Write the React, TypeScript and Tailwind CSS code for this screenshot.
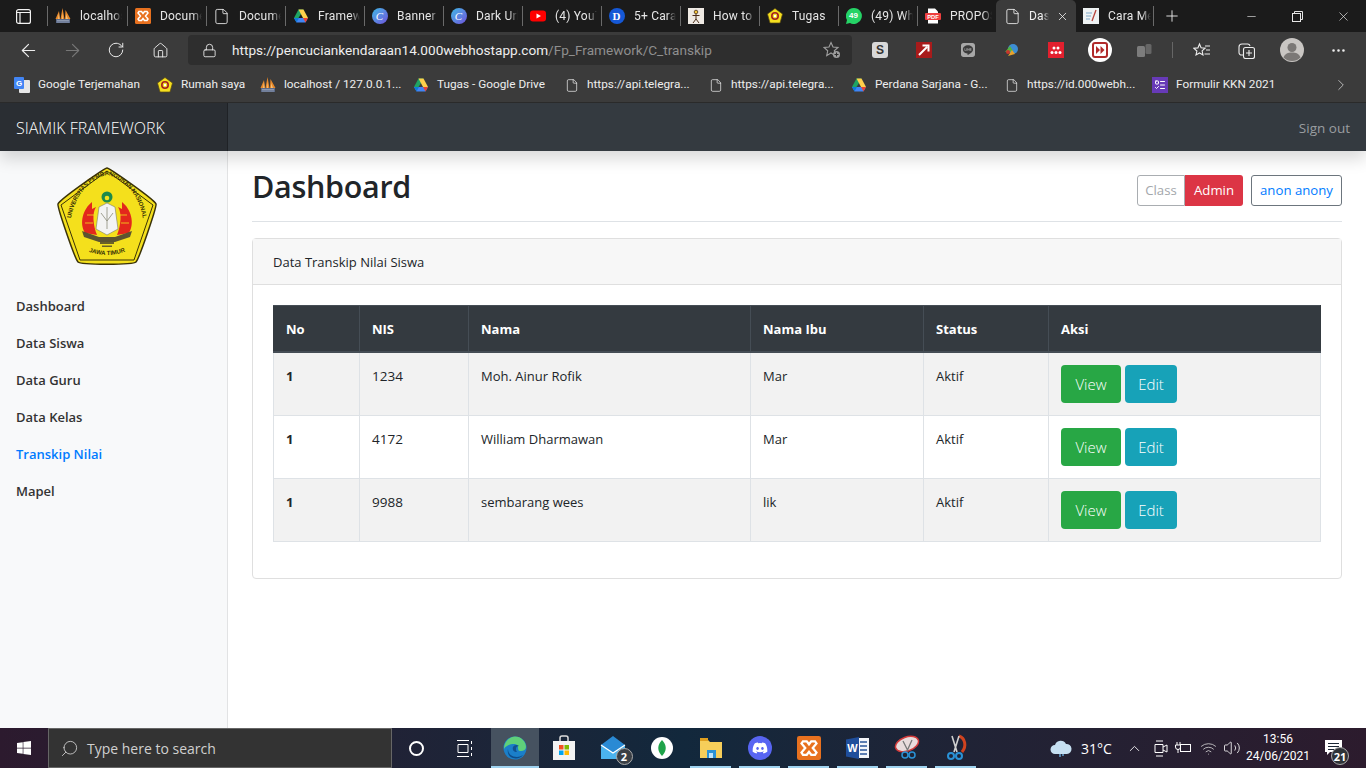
import React from "react";
import { ArrowLeft, ArrowRight, RotateCw, Home, Lock, Plus, X, Minus, ChevronRight, Search, ChevronUp, Volume2, Wifi, File, MoreHorizontal, ListTodo } from "lucide-react";
import { FaWindows, FaDiscord, FaLine } from "react-icons/fa";

const Pma = ({ s = 16 }: { s?: number }) => (
  <svg width={s} height={s} viewBox="0 0 16 16">
    <path d="M0.500 11 L4 3 L5 11Z M5.500 11 L7.500 0 L9.500 11Z M10 11 L10.500 2 L15.500 11Z" fill="#e8892a" />
    <path d="M3 11 L4 5 L4.500 11Z M7 11 L7.500 4 L8 11Z M11 11 L11 6 L13 11Z" fill="#f6c27a" />
    <rect x="1" y="11" width="14" height="4" fill="#5b6a88" />
    <path d="M2 12.500h12M2 14h12" stroke="#aeb7c9" strokeWidth=".6" />
  </svg>
);
const Xampp = ({ s = 16 }: { s?: number }) => (
  <svg width={s} height={s} viewBox="0 0 16 16">
    <rect width="16" height="16" rx="1.500" fill="#e8711f" />
    <path d="M4 3.500h2.500l1.500 2 1.500-2H12l1 1.500-2.500 3 2.500 3L12 12.500H9.500l-1.500-2-1.500 2H4l-1-1.500 2.500-3L3 5z" fill="none" stroke="#fff" strokeWidth="1.500" />
  </svg>
);
const Drive = ({ s = 16 }: { s?: number }) => (
  <svg width={s} height={s} viewBox="0 0 16 16">
    <path d="M5.500 1.500h5L8 6 5.500 10H1z" fill="#1fa463" />
    <path d="M5.500 1.500h5L15 10h-5z" fill="#ffd04b" />
    <path d="M4 10h11l-2.500 4.500H3.500L1 10z" fill="#4285f4" />
    <path d="M1 10h5l-2.500 4.500z" fill="#0f7ad8" />
    <path d="M10 10h5l-2.500 4.500z" fill="#ea4335" />
  </svg>
);
const Canva = () => (
  <div className="flex h-4 w-4 items-center justify-center rounded-full bg-gradient-to-br from-[#2fb8e6] to-[#6a4fdc] font-['Liberation_Serif',serif] text-[11px] italic text-white">C</div>
);
const Yt = () => (
  <svg width="16" height="16" viewBox="0 0 16 16">
    <rect y="2.500" width="16" height="11" rx="3" fill="#f00" />
    <path d="M6.500 5.500v5L11 8z" fill="#fff" />
  </svg>
);
const DIcon = () => (
  <div className="flex h-4 w-4 items-center justify-center rounded-full bg-[#1558d6] font-['Liberation_Serif',serif] text-[11px] font-bold text-white">D</div>
);
const Stick = () => (
  <svg width="16" height="16" viewBox="0 0 16 16">
    <rect width="16" height="16" fill="#efeae4" />
    <circle cx="8" cy="4" r="1.800" fill="#f3c73a" stroke="#4a2c17" strokeWidth=".8" />
    <path d="M8 6v5M4.500 7.500h7M8 11l-3 4M8 11l3 4" stroke="#4a2c17" strokeWidth="1" fill="none" />
  </svg>
);
const Badge = ({ s = 16 }: { s?: number }) => (
  <svg width={s} height={s} viewBox="0 0 16 16">
    <path d="M8 .500 15.500 6 13 15H3L.500 6z" fill="#f5df1f" stroke="#5b4a10" strokeWidth=".7" strokeLinejoin="round" />
    <circle cx="8" cy="8" r="3.200" fill="none" stroke="#a32222" strokeWidth="1.600" />
    <circle cx="8" cy="8" r="1.200" fill="#fff" />
  </svg>
);
const Wa = () => (
  <div className="relative flex h-4 w-4 items-center justify-center">
    <svg className="absolute inset-0" width="16" height="16" viewBox="0 0 16 16"><path d="M8 0a8 8 0 1 1-4 15L0 16l1-4A8 8 0 0 1 8 0z" fill="#25d366" /></svg>
    <span className="relative font-['Liberation_Sans',sans-serif] text-[8px] font-bold leading-none text-white">49</span>
  </div>
);
const Pdf = () => (
  <svg width="16" height="16" viewBox="0 0 16 16">
    <path d="M3 .500h7l3 3V15.500H3z" fill="#fff" />
    <rect y="5" width="16" height="7" rx="1" fill="#ee3f3f" />
    <text x="8" y="10.800" textAnchor="middle" fontSize="5.800" fontWeight="700" fill="#fff" fontFamily="Liberation Sans">PDF</text>
  </svg>
);
const Note = () => (
  <svg width="16" height="16" viewBox="0 0 16 16">
    <rect width="16" height="16" fill="#eef2f3" />
    <path d="M3 5h6M3 8h5M3 11h4" stroke="#7fa8c9" strokeWidth="1" />
    <path d="M13 2 9 13" stroke="#b8443b" strokeWidth="1.300" />
  </svg>
);
const FileI = () => <File size={17} strokeWidth={1.200} className="text-[#f2f2f2]" />;

const tabs: { icon: React.ReactNode; title: string; w: string }[] = [
  { icon: <Pma />, title: "localhost", w: "w-[80px]" },
  { icon: <Xampp />, title: "Documen", w: "w-[79px]" },
  { icon: <FileI />, title: "Documen", w: "w-[79px]" },
  { icon: <Drive />, title: "Framewo", w: "w-[79px]" },
  { icon: <Canva />, title: "Banner Y", w: "w-[79px]" },
  { icon: <Canva />, title: "Dark Urb", w: "w-[79px]" },
  { icon: <Yt />, title: "(4) YouTu", w: "w-[79px]" },
  { icon: <DIcon />, title: "5+ Cara", w: "w-[79px]" },
  { icon: <Stick />, title: "How to", w: "w-[79px]" },
  { icon: <Badge />, title: "Tugas", w: "w-[79px]" },
  { icon: <Wa />, title: "(49) Wha", w: "w-[79px]" },
  { icon: <Pdf />, title: "PROPOS", w: "w-[79px]" },
];

const Tab = ({ icon, title, w }: { icon: React.ReactNode; title: string; w: string }) => (
  <div className={`flex h-8 shrink-0 items-center ${w}`}>
    <div className="h-[20px] w-px shrink-0 bg-[#6a6a6a]" />
    <div className="ml-[6px] flex w-[17px] shrink-0 justify-center">{icon}</div>
    <div className="ml-[9px] w-[42px] overflow-hidden whitespace-nowrap text-[12px] tracking-[0.2px] text-[#e6e6e6] [mask-image:linear-gradient(to_right,black_78%,transparent)]">{title}</div>
  </div>
);

const TabStrip = () => (
  <div className="flex h-8 shrink-0 items-center bg-[#1b1b1b] font-['Roboto',sans-serif]">
    <div className="flex h-8 w-[47px] shrink-0 items-center justify-center">
      <svg width="15" height="15" viewBox="0 0 15 15" fill="none" stroke="#f2f2f2" strokeWidth="1.200"><rect x=".600" y=".600" width="13.800" height="13.800" rx="2" /><path d="M.600 3.500h13.800M4 3.500v11" /></svg>
    </div>
    {tabs.map((t, i) => <Tab key={i} {...t} />)}
    <div className="flex h-8 w-[80px] shrink-0 items-center rounded-t-[5px] bg-[#3b3b3b]">
      <div className="ml-[8px] flex w-[17px] justify-center"><FileI /></div>
      <div className="ml-[8px] w-[20px] overflow-hidden whitespace-nowrap text-[12px] tracking-[0.2px] text-[#f0f0f0] [mask-image:linear-gradient(to_right,black_70%,transparent)]">Das</div>
      <X size={13} strokeWidth={1.500} className="ml-[7px] text-[#f0f0f0]" />
    </div>
    <div className="flex h-8 w-[78px] shrink-0 items-center">
      <div className="ml-[6px] flex w-[17px] justify-center"><Note /></div>
      <div className="ml-[9px] w-[43px] overflow-hidden whitespace-nowrap text-[12px] tracking-[0.2px] text-[#e6e6e6] [mask-image:linear-gradient(to_right,black_78%,transparent)]">Cara Mem</div>
      <div className="ml-[2px] h-[20px] w-px bg-[#6a6a6a]" />
    </div>
    <div className="flex w-[36px] justify-center"><Plus size={18} strokeWidth={1.200} className="text-[#f2f2f2]" /></div>
    <div className="ml-auto flex h-8">
      <div className="flex w-[46px] items-center justify-center"><Minus size={13} strokeWidth={1.200} className="text-[#e6e6e6]" /></div>
      <div className="flex w-[46px] items-center justify-center">
        <svg width="11" height="11" viewBox="0 0 11 11" fill="none" stroke="#e6e6e6" strokeWidth="1"><rect x=".500" y="2.500" width="8" height="8" /><path d="M2.500 2.500V.500h8v8h-2" /></svg>
      </div>
      <div className="flex w-[46px] items-center justify-center"><X size={15} strokeWidth={1.100} className="text-[#e6e6e6]" /></div>
    </div>
  </div>
);

const Btn = ({ children }: { children: React.ReactNode }) => (
  <div className="flex h-9 w-11 shrink-0 items-center justify-center">{children}</div>
);

const Toolbar = () => (
  <div className="flex h-9 shrink-0 items-center bg-[#3b3b3b] pl-[6px] font-['Roboto',sans-serif]">
    <Btn><ArrowLeft size={21} strokeWidth={1.300} className="text-[#eeeeee]" /></Btn>
    <Btn><ArrowRight size={21} strokeWidth={1.300} className="text-[#777777]" /></Btn>
    <Btn><RotateCw size={18} strokeWidth={1.300} className="text-[#eeeeee]" /></Btn>
    <Btn><Home size={17} strokeWidth={1.300} className="text-[#eeeeee]" /></Btn>
    <div className="ml-[6px] flex h-[30px] w-[664px] shrink-0 items-center rounded-[4px] bg-[#2e2e2e]">
      <Lock size={15} strokeWidth={1.400} className="ml-[14px] text-[#eeeeee]" />
      <div className="ml-[15px] whitespace-nowrap text-[13.600px] text-[#eeeeee]">https://pencuciankendaraan14.000webhostapp.com<span className="text-[#8f8f8f]">/Fp_Framework/C_transkip</span></div>
      <div className="relative ml-auto mr-[11px] h-[18px] w-[18px]">
        <svg width="18" height="18" viewBox="0 0 18 18" fill="none" stroke="#a0a0a0" strokeWidth="1.100"><path d="M8 1.500l2 4.500 5 .5-3.700 3.300 1 4.800L8 12l-4.300 2.600 1-4.800L1 6.500 6 6z" /><circle cx="13.500" cy="13.500" r="3.500" fill="#a0a0a0" stroke="none" /><path d="M13.500 11.500v4M11.500 13.500h4" stroke="#2e2e2e" /></svg>
      </div>
    </div>
    <div className="ml-[6px] flex">
      <Btn><div className="flex h-4 w-4 items-center justify-center rounded-[3px] bg-[#d8d8d8] font-['Liberation_Sans',sans-serif] text-[12px] font-bold text-[#333]">S</div></Btn>
      <Btn><svg width="16" height="16" viewBox="0 0 16 16"><rect width="16" height="16" fill="#a81b1b" /><path d="M3 13 11 5M6.500 3.500h6v6" stroke="#fff" strokeWidth="2" fill="none" /></svg></Btn>
      <Btn><FaLine size={16} className="text-[#a8a8a8]" /></Btn>
      <Btn><svg width="16" height="14" viewBox="0 0 16 14"><circle cx="9" cy="6" r="5" fill="#3d8ed4" /><path d="M1 9 6 3l3 5z" fill="#55b33d" /><path d="M4 13 8 7l3 4z" fill="#e8a32b" /><circle cx="4" cy="9" r="2" fill="#c9352b" /></svg></Btn>
      <Btn><div className="flex h-4 w-4 flex-col items-center justify-center bg-[#e2202e]"><svg width="12" height="8" viewBox="0 0 12 8" fill="#fff"><circle cx="2" cy="6.500" r="1.500" /><circle cx="6" cy="6.500" r="1.500" /><circle cx="10" cy="6.500" r="1.500" /><circle cx="4" cy="2" r="1.500" /><circle cx="8" cy="2" r="1.500" /></svg></div></Btn>
      <Btn><div className="flex h-6 w-6 items-center justify-center rounded-full bg-white"><div className="flex h-[16px] w-[16px] items-center justify-center rounded-[3px] border-2 border-[#b02a2a]"><svg width="9" height="8" viewBox="0 0 9 8" fill="#b02a2a"><path d="M0 0l4 4-4 4zM4.500 0l4 4-4 4z" /></svg></div></div></Btn>
      <Btn><svg width="15" height="15" viewBox="0 0 15 15" fill="#7c7c7c"><rect y="3" width="8" height="11" rx="1.500" /><rect x="8.500" y="1" width="6" height="10" rx="1.500" fill="#666" /></svg></Btn>
    </div>
    <div className="ml-[6px] h-4 w-px bg-[#666]" />
    <div className="ml-[7px] flex">
      <Btn><svg width="18" height="17" viewBox="0 0 18 17" fill="none" stroke="#eeeeee" strokeWidth="1.100"><path d="M6.500 2l1.600 3.800 4 .4-3 2.700.9 4L6.500 11l-3.500 2 .9-4-3-2.700 4-.4zM12 4h5M13 8h4M11.500 12H17" /></svg></Btn>
      <Btn><svg width="17" height="17" viewBox="0 0 17 17" fill="none" stroke="#eeeeee" strokeWidth="1.100"><path d="M6 13H3.500A2.500 2.500 0 0 1 1 10.500V5a3 3 0 0 1 3-3h5.500A2.500 2.500 0 0 1 12 4" /><rect x="5.500" y="5.500" width="11" height="11" rx="2" /><path d="M11 8v6M8 11h6" /></svg></Btn>
    </div>
    <div className="ml-[2px]">
      <Btn><svg width="24" height="24" viewBox="0 0 24 24"><circle cx="12" cy="12" r="12" fill="#c9c6c3" /><circle cx="12" cy="9.500" r="4.500" fill="#7b7876" /><path d="M3.500 19.500C5 15.500 8 14.500 12 14.500s7 1 8.500 5A12 12 0 0 1 3.500 19.500z" fill="#7b7876" /></svg></Btn>
    </div>
    <div className="ml-[2px]">
      <Btn><MoreHorizontal size={17} strokeWidth={1.700} className="text-[#eeeeee]" /></Btn>
    </div>
  </div>
);

const FileB = () => <div className="flex w-[14px] justify-center"><FileI /></div>;

const bookmarks: { icon: React.ReactNode; label: string; w: string }[] = [
  { icon: <svg width="16" height="16" viewBox="0 0 16 16"><rect x="5" y="3" width="11" height="13" rx="1" fill="#e6e6e6" /><rect width="10" height="12" rx="1" fill="#4285f4" /><text x="5" y="9" fontSize="8" fontWeight="700" fill="#fff" textAnchor="middle" fontFamily="Liberation Sans">G</text></svg>, label: "Google Terjemahan", w: "w-[143px]" },
  { icon: <Badge />, label: "Rumah saya", w: "w-[103px]" },
  { icon: <Pma />, label: "localhost / 127.0.0.1...", w: "w-[153px]" },
  { icon: <Drive />, label: "Tugas - Google Drive", w: "w-[152px]" },
  { icon: <FileB />, label: "https://api.telegra...", w: "w-[144px]" },
  { icon: <FileB />, label: "https://api.telegra...", w: "w-[142px]" },
  { icon: <Drive />, label: "Perdana Sarjana - G...", w: "w-[154px]" },
  { icon: <FileB />, label: "https://id.000webh...", w: "w-[147px]" },
  { icon: <div className="flex h-4 w-4 items-center justify-center bg-[#673ab7]"><ListTodo size={12} strokeWidth={2} className="text-white" /></div>, label: "Formulir KKN 2021", w: "w-[150px]" },
];

const Bookmarks = () => (
  <div className="flex h-[35px] shrink-0 items-center border-b border-[#2a2a2a] bg-[#3b3b3b] pl-[14px] font-['Roboto',sans-serif]">
    {bookmarks.map((b, i) => (
      <div key={i} className={`flex shrink-0 items-center gap-[8px] ${b.w}`}>
        {b.icon}
        <span className="whitespace-nowrap text-[11.800px] text-[#eeeeee]">{b.label}</span>
      </div>
    ))}
    <ChevronRight size={18} strokeWidth={1.300} className="ml-[30px] text-[#b8b8b8]" />
  </div>
);

const Logo = () => (
  <svg width="100" height="100" viewBox="0 0 100 100">
    <defs>
      <path id="arcTop" d="M14 52 C18 24 38 10 50 8 C62 10 82 24 86 52" />
      <path id="arcBottom" d="M30 84 Q50 92 70 84" />
    </defs>
    <path d="M50 1 C52 1 97 32 99 37 C100 40 82 92 79 95 C76 98 24 98 21 95 C18 92 0 40 1 37 C3 32 48 1 50 1Z" fill="#f4e01c" stroke="#3a3207" strokeWidth="1.500" />
    <path d="M50 4 L96 38 L77 93 L23 93 L4 38Z" fill="none" stroke="#3a3207" strokeWidth="1" strokeLinejoin="round" />
    <text fontSize="6" fontWeight="700" fill="#3a3207" fontFamily="Liberation Sans" letterSpacing="-.1"><textPath href="#arcTop" startOffset="50%" textAnchor="middle">UNIVERSITAS PEMBANGUNAN NASIONAL</textPath></text>
    <text fontSize="6" fontWeight="700" fill="#3a3207" fontFamily="Liberation Sans"><textPath href="#arcBottom" startOffset="50%" textAnchor="middle">JAWA TIMUR</textPath></text>
    <circle cx="50" cy="30" r="5.500" fill="#1d8a4a" />
    <circle cx="50" cy="31" r="2.300" fill="#f4e01c" />
    <path d="M35 35 C26 42 22 56 28 66 L40 68 C36 58 35 46 39 40 L35 42Z" fill="#e3271c" />
    <path d="M65 35 C74 42 78 56 72 66 L60 68 C64 58 65 46 61 40 L65 42Z" fill="#e3271c" />
    <path d="M30 48h7M28 56h8M72 56h-8M70 48h-7" stroke="#f4e01c" strokeWidth=".8" />
    <path d="M42 40 L50 36 L58 40 L61 62 L50 68 L39 62Z" fill="#f3f3f3" stroke="#7a7a6a" strokeWidth=".6" />
    <path d="M50 40v22M44 46l6 8M56 46l-6 8" stroke="#8a8a7a" strokeWidth=".8" fill="none" />
    <path d="M25 64 L42 70 H58 L75 64 L73 70 L58 75 H42 L27 70Z" fill="#5c5430" />
    <rect x="43" y="75" width="14" height="2" fill="#6b6228" />
    <rect x="45" y="78.500" width="10" height="1.500" fill="#6b6228" />
  </svg>
);

const rows = [
  { nis: "1234", nama: "Moh. Ainur Rofik", ibu: "Mar" },
  { nis: "4172", nama: "William Dharmawan", ibu: "Mar" },
  { nis: "9988", nama: "sembarang wees", ibu: "lik" },
];

const Dash = () => (
  <div className="relative flex flex-1 flex-col overflow-hidden font-['Open_Sans',sans-serif]">
    <div className="relative z-10 flex h-12 shrink-0 bg-[#343a40] shadow-[0_8px_16px_rgba(0,0,0,0.15)]">
      <div className="flex w-[228px] shrink-0 items-center bg-[#2a2e33] pl-4 pt-[2px] text-[16px] font-light text-white shadow-[inset_-1px_0_0_rgba(0,0,0,.25)]">SIAMIK FRAMEWORK</div>
      <div className="ml-auto flex items-center pr-4 pt-[2px] text-[13.500px] text-[#9a9da0]">Sign out</div>
    </div>
    <div className="flex min-h-0 flex-1">
      <aside className="w-[228px] shrink-0 border-r border-[#e2e3e4] bg-[#f8f9fa]">
        <div className="ml-[57px] mt-4 flex"><Logo /></div>
        <nav className="mt-[21px] flex flex-col text-[13px] font-semibold text-[#333333]">
          {["Dashboard", "Data Siswa", "Data Guru", "Data Kelas", "Transkip Nilai", "Mapel"].map((n) => (
            <div key={n} className={`px-4 py-2 leading-[21px] ${n === "Transkip Nilai" ? "text-[#007bff]" : ""}`}>{n}</div>
          ))}
        </nav>
      </aside>
      <main className="min-w-0 flex-1 bg-white px-6">
        <div className="mb-4 flex items-center justify-between border-b border-[#dee2e6] pb-2 pt-4">
          <h1 className="mb-2 -mt-[1px] pt-[1px] text-[30.500px] font-semibold leading-[38.400px] tracking-[-0.3px] text-[#212529]">Dashboard</h1>
          <div className="flex items-center text-[13.200px]">
            <div className="flex h-[31px] w-[48px] items-center justify-center rounded-l-[3px] border border-[#a9adb1] pt-px text-[#a3a7ab]">Class</div>
            <div className="flex h-[31px] w-[58px] items-center justify-center rounded-r-[3px] bg-[#dc3545] pt-px text-white">Admin</div>
            <div className="ml-2 flex h-[31px] w-[91px] items-center justify-center rounded-[3px] border border-[#6c757d] pt-px text-[#007bff]">anon anony</div>
          </div>
        </div>
        <div className="rounded-[4px] border border-[#dfdfdf]">
          <div className="border-b border-[#dfdfdf] bg-[#f7f7f7] px-5 pb-[11px] pt-[13px] text-[13px] leading-[21px] text-[#212529]">Data Transkip Nilai Siswa</div>
          <div className="p-5">
            <table className="mb-4 w-[1047px] table-fixed border-collapse text-[13px] leading-[21px] text-[#212529]">
              <colgroup>
                <col className="w-[86px]" /><col className="w-[109px]" /><col className="w-[282px]" /><col className="w-[173px]" /><col className="w-[125px]" /><col className="w-[272px]" />
              </colgroup>
              <thead>
                <tr className="bg-[#343a40] text-left text-white">
                  {["No", "NIS", "Nama", "Nama Ibu", "Status", "Aksi"].map((h) => (
                    <th key={h} className="border border-b-2 border-[#454d55] px-3 pb-[11px] pt-[13px] font-bold first:border-l-[#343a40] last:border-r-[#343a40]">{h}</th>
                  ))}
                </tr>
              </thead>
              <tbody>
                {rows.map((r, i) => (
                  <tr key={r.nis} className={i % 2 === 0 ? "bg-[#f2f2f2]" : "bg-white"}>
                    <th className="border border-[#dee2e6] px-3 pb-[11px] pt-[13px] text-left align-top font-bold">1</th>
                    <td className="border border-[#dee2e6] px-3 pb-[11px] pt-[13px] align-top text-[13.500px]">{r.nis}</td>
                    <td className="border border-[#dee2e6] px-3 pb-[11px] pt-[13px] align-top">{r.nama}</td>
                    <td className="border border-[#dee2e6] px-3 pb-[11px] pt-[13px] align-top">{r.ibu}</td>
                    <td className="border border-[#dee2e6] px-3 pb-[11px] pt-[13px] align-top">Aktif</td>
                    <td className="border border-[#dee2e6] p-3 align-top">
                      <div className="flex gap-1 text-[15px] font-light text-white">
                        <div className="flex h-[38px] w-[60px] items-center justify-center rounded-[4px] bg-[#28a745]">View</div>
                        <div className="flex h-[38px] w-[52px] items-center justify-center rounded-[4px] bg-[#17a2b8]">Edit</div>
                      </div>
                    </td>
                  </tr>
                ))}
              </tbody>
            </table>
          </div>
        </div>
      </main>
    </div>
  </div>
);

const TaskCell = ({ children, active, open }: { children: React.ReactNode; active?: boolean; open?: boolean }) => (
  <div className={`relative flex h-10 shrink-0 items-center justify-center ${active ? "w-[48px] bg-[#465260]" : "w-[49px]"}`}>
    {children}
    {open && <div className={`absolute bottom-0 h-[2px] bg-[#9fd3f0] ${active ? "inset-x-0" : "inset-x-[4px]"}`} />}
  </div>
);

const Taskbar = () => (
  <div className="flex h-10 shrink-0 items-center bg-gradient-to-r from-[#2c1a2e] via-[#12283c] to-[#2c1b2d] font-['Open_Sans',sans-serif] text-white">
    <div className="flex w-[48px] shrink-0 justify-center"><FaWindows size={16} /></div>
    <div className="flex h-10 w-[344px] shrink-0 items-center border border-[#666] bg-[#333333] pl-[11px] text-[#d0d0d0]">
      <Search size={19} strokeWidth={1.100} className="-scale-x-100" />
      <span className="ml-[8px] text-[14px]">Type here to search</span>
    </div>
    <div className="flex w-[48px] shrink-0 justify-center"><div className="h-[15px] w-[15px] rounded-full border-2 border-white" /></div>
    <div className="flex w-[51px] shrink-0 justify-center">
      <svg width="17" height="17" viewBox="0 0 17 17" fill="none" stroke="#fff" strokeWidth="1"><path d="M0 .500h12M0 16.500h12M1 4.500h10v8H1zM14.500 1v3M14.500 7v3M14.500 13v3" /></svg>
    </div>
    <TaskCell active open>
      <svg width="24" height="24" viewBox="0 0 24 24"><circle cx="12" cy="12" r="11.500" fill="#1b7fc9" /><path d="M1 13C1 5 7 .500 12 .500c6 0 11 5 11 10.500 0 3-3 4.500-6 4-3-.5-1-4-3-6S4 8 1 13z" fill="#5fd07a" /><path d="M14 16c-3 0-5-2-4-5 1-2 4-3 6-1-3 0-4 3-2 6z" fill="#11528f" /><path d="M10 22c-4-1-6-5-5-9 0 5 4 8 9 8 2 0 4-1 6-2-2 3-6 4-10 3z" fill="#0d4d8a" /></svg>
    </TaskCell>
    <TaskCell>
      <svg width="24" height="26" viewBox="0 0 24 26"><path d="M8 6V3a2 2 0 0 1 2-2h4a2 2 0 0 1 2 2v3" fill="none" stroke="#ddd" strokeWidth="1.500" /><rect x="1" y="6" width="22" height="19" fill="#f3f3f3" /><rect x="7" y="10" width="4.500" height="4.500" fill="#f25022" /><rect x="12.500" y="10" width="4.500" height="4.500" fill="#7fba00" /><rect x="7" y="15.500" width="4.500" height="4.500" fill="#00a4ef" /><rect x="12.500" y="15.500" width="4.500" height="4.500" fill="#ffb900" /></svg>
    </TaskCell>
    <TaskCell>
      <div className="relative">
        <svg width="26" height="24" viewBox="0 0 26 24"><path d="M1 9 13 0l12 9v14H1z" fill="#2a8ad4" /><path d="M1 9l12 8 12-8v14H1z" fill="#4bb3ee" /><path d="M1 9l12 8 12-8" fill="none" stroke="#fff" strokeWidth="1.200" /></svg>
        <div className="absolute -bottom-[5px] -right-[7px] flex h-[17px] w-[17px] items-center justify-center rounded-full border border-[#aaa] bg-[#3a3f45] text-[11px] font-bold leading-none">2</div>
      </div>
    </TaskCell>
    <TaskCell>
      <div className="flex h-[22px] w-[22px] items-center justify-center rounded-full bg-white"><svg width="8" height="16" viewBox="0 0 8 16"><path d="M4 0c5 5 5 11 0 16C-1 11-1 5 4 0z" fill="#1fa34a" /></svg></div>
    </TaskCell>
    <TaskCell open>
      <svg width="24" height="22" viewBox="0 0 24 22"><path d="M1 3h8l2 2h12v16H1z" fill="#f6ce5a" /><path d="M1 1h8v3H1z" fill="#e0a020" /><rect x="8" y="13" width="9" height="8" fill="#2a92d6" /><rect x="10" y="16" width="4" height="5" fill="#bfe4fa" /></svg>
    </TaskCell>
    <TaskCell open>
      <div className="flex h-6 w-6 items-center justify-center rounded-full bg-[#5865f2]"><FaDiscord size={16} /></div>
    </TaskCell>
    <TaskCell open><Xampp s={24} /></TaskCell>
    <TaskCell open>
      <svg width="24" height="24" viewBox="0 0 24 24"><rect x="8" y="2" width="15" height="20" fill="#f3f6fa" /><path d="M14 6h7M14 10h7M14 14h7M14 18h7" stroke="#2b579a" strokeWidth="1.300" /><path d="M0 3.500 13 1v22L0 20.500z" fill="#1f4e9b" /><text x="6.500" y="16" textAnchor="middle" fontSize="11" fontWeight="700" fill="#fff" fontFamily="Liberation Sans">W</text></svg>
    </TaskCell>
    <TaskCell open>
      <svg width="26" height="26" viewBox="0 0 26 26"><ellipse cx="13" cy="9" rx="12" ry="7" transform="rotate(-20 13 9)" fill="#e8dcdc" stroke="#d23a3a" strokeWidth="1.500" /><path d="M9 6l5 10M18 5l-5 11" stroke="#777" strokeWidth="1.300" /><circle cx="11" cy="20" r="3" fill="none" stroke="#2a92d6" strokeWidth="1.500" /><circle cx="18" cy="20" r="3" fill="none" stroke="#2a92d6" strokeWidth="1.500" /></svg>
    </TaskCell>
    <TaskCell open>
      <svg width="24" height="28" viewBox="0 0 24 28"><path d="M15 2c6 2 8 10 3 16" fill="none" stroke="#d0431f" strokeWidth="3" /><path d="M8 2l5 16M15 2l-5 16" stroke="#cfcfcf" strokeWidth="1.600" /><circle cx="7" cy="22" r="3" fill="none" stroke="#2a92d6" strokeWidth="2" /><circle cx="15" cy="22" r="3" fill="none" stroke="#2a92d6" strokeWidth="2" /></svg>
    </TaskCell>
    <div className="ml-auto flex h-10 items-center">
      <svg width="22" height="17" viewBox="0 0 22 17"><path d="M5 14a4.500 4.500 0 0 1 0-9 6 6 0 0 1 11-1 5 5 0 0 1 1 10z" fill="#c6e0f2" /><path d="M10 14v3M13 14v2" stroke="#6db6e8" strokeWidth="1.300" /></svg>
      <span className="ml-[9px] w-[30px] text-[14px]">31°C</span>
      <ChevronUp size={17} strokeWidth={1.200} className="ml-[15px]" />
      <svg className="ml-[10px]" width="15" height="17" viewBox="0 0 15 17" fill="none" stroke="#fff" strokeWidth="1"><path d="M3 1h7M3 16h7M2 4.500h8v8H2zM10 7l4-2v7l-4-2" /></svg>
      <svg className="ml-[7px]" width="16" height="12" viewBox="0 0 16 12" fill="none" stroke="#fff" strokeWidth="1"><rect x="5.500" y="2.500" width="10" height="7" /><path d="M2 0v3M5 0v3M.5 3h5v2a2.500 2.500 0 0 1-5 0zM3 7v4" /></svg>
      <Wifi size={17} strokeWidth={1.100} className="ml-[9px] text-[#dddddd]" />
      <Volume2 size={18} strokeWidth={1.100} className="ml-[6px]" />
      <div className="ml-[8px] flex w-[58px] flex-col items-center font-['Roboto',sans-serif] text-[12px] leading-[17px]">
        <span>13:56</span>
        <span>24/06/2021</span>
      </div>
      <div className="relative ml-[16px] mr-[23px] flex h-10 w-[20px] items-center justify-center">
        <svg width="17" height="16" viewBox="0 0 17 16"><path d="M0 0h17v12H5l-3 3v-3H0z" fill="#fff" /><path d="M3 3.500h11M3 6.500h11M3 9.500h7" stroke="#1b2735" /></svg>
        <div className="absolute bottom-[3px] -right-[6px] flex h-[18px] w-[18px] items-center justify-center rounded-full border border-[#aaa] bg-[#2f3338] text-[11px] font-bold leading-none">21</div>
      </div>
    </div>
  </div>
);

export default function App() {
  return (
    <div className="flex h-[768px] w-[1366px] flex-col overflow-hidden bg-white font-['Open_Sans',sans-serif]">
      <TabStrip />
      <Toolbar />
      <Bookmarks />
      <Dash />
      <Taskbar />
    </div>
  );
}
